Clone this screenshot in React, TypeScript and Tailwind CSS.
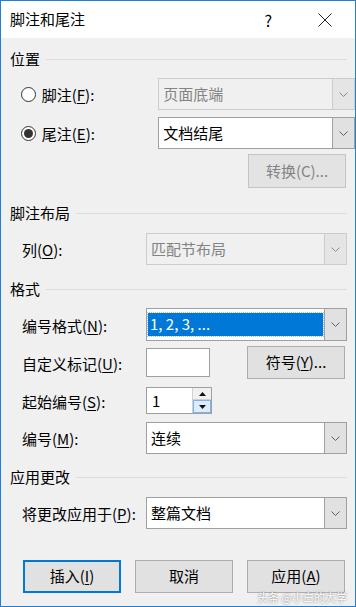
import React from 'react';

const font = { fontFamily: '"Noto Sans CJK SC", "Noto Sans", sans-serif' };

// 小的下拉箭头
function Chevron({ color = '#606060' }: { color?: string }) {
  return (
    <svg width="9" height="5" viewBox="0 0 9 5" fill="none">
      <path d="M0.5 0.5 L4.5 4.5 L8.5 0.5" stroke={color} strokeWidth="1" />
    </svg>
  );
}

function Heading({ text, className = '' }: { text: string; className?: string }) {
  return (
    <div className={`flex items-center h-[20px] pl-[9px] pr-[8px] gap-[6px] ${className}`}>
      <span className="text-[15px] leading-[20px] text-black whitespace-nowrap">{text}</span>
      <div className="flex-1 h-px bg-[#dcdcdc]" />
    </div>
  );
}

function Label({ pre, key1, post }: { pre: string; key1: string; post: string }) {
  return (
    <span className="text-[15px] leading-[20px] text-black whitespace-nowrap">
      {pre}(<span className="underline underline-offset-2">{key1}</span>){post}
    </span>
  );
}

function Combo({
  value,
  disabled = false,
  selected = false,
  h = 'h-[32px]',
}: {
  value: string;
  disabled?: boolean;
  selected?: boolean;
  h?: string;
}) {
  return (
    <div
      className={`flex w-[201px] ${h} border ${
        disabled ? 'border-[#cccccc] bg-[#f0f0f0]' : 'border-[#a0a0a0] bg-white'
      }`}
    >
      <div className="flex-1 flex items-center px-[1px]">
        {selected ? (
          <div className="flex items-center w-full h-[23px] bg-[#0078d7] outline outline-1 outline-dotted outline-[#9fc7ef] pl-[2px]">
            <span className="text-[15px] text-white">1, 2, 3, ...</span>
          </div>
        ) : (
          <span className={`pl-[3px] text-[15px] ${disabled ? 'text-[#838383]' : 'text-black'}`}>{value}</span>
        )}
      </div>
      <div
        className={`w-[22px] flex items-center justify-center border-l ${
          disabled ? 'border-[#cccccc] bg-[#e5e5e5]' : 'border-[#a0a0a0] bg-[#e1e1e1]'
        }`}
      >
        <Chevron color={disabled ? '#8a8a8a' : '#606060'} />
      </div>
    </div>
  );
}

function Radio({ checked }: { checked?: boolean }) {
  return (
    <div className="w-[15px] h-[15px] rounded-full border border-[#333333] bg-white flex items-center justify-center">
      {checked && <div className="w-[9px] h-[9px] rounded-full bg-[#333333]" />}
    </div>
  );
}

function Btn({ children, primary = false }: { children: React.ReactNode; primary?: boolean }) {
  return (
    <div
      className={`w-[98px] h-[33px] flex items-center justify-center text-[15px] bg-[#e1e1e1] text-black ${
        primary ? 'border-2 border-[#0078d7]' : 'border border-[#adadad]'
      }`}
    >
      {children}
    </div>
  );
}

export default function App() {
  return (
    <div style={font} className="relative w-[356px] h-[607px] border border-[#1e7fd6] bg-[#f0f0f0] flex flex-col overflow-hidden">
      {/* 标题栏 */}
      <div className="h-[37px] bg-white flex items-center pl-[9px] pr-[23px]">
        <span className="text-[15px] text-black flex-1">脚注和尾注</span>
        <span className="text-[16px] text-black mr-[46px]">?</span>
        <svg width="14" height="14" viewBox="0 0 14 14">
          <path d="M0.5 0.5 L13.5 13.5 M13.5 0.5 L0.5 13.5" stroke="#222" strokeWidth="1" />
        </svg>
      </div>

      {/* 位置 */}
      <Heading text="位置" className="mt-[11px]" />
      <div className="mt-[9px] flex items-center h-[32px] pl-[20px]">
        <Radio />
        <span className="ml-[6px] w-[119px]">
          <Label pre="脚注" key1="F" post=":" />
        </span>
        <Combo value="页面底端" disabled />
      </div>
      <div className="mt-[7px] flex items-center h-[32px] pl-[20px]">
        <Radio checked />
        <span className="ml-[6px] w-[119px]">
          <Label pre="尾注" key1="E" post=":" />
        </span>
        <Combo value="文档结尾" />
      </div>
      <div className="mt-[5px] flex justify-end pr-[9px]">
        <div className="w-[98px] h-[34px] flex items-center justify-center text-[15px] bg-[#e3e3e3] border border-[#c4c4c4] text-[#838383]">
          转换(C)...
        </div>
      </div>

      {/* 脚注布局 */}
      <Heading text="脚注布局" className="mt-[15px]" />
      <div className="mt-[10px] flex items-center h-[32px] pl-[21px]">
        <span className="w-[124px]">
          <Label pre="列" key1="O" post=":" />
        </span>
        <Combo value="匹配节布局" disabled />
      </div>

      {/* 格式 */}
      <Heading text="格式" className="mt-[14px]" />
      <div className="mt-[9px] flex items-center h-[33px] pl-[21px]">
        <span className="w-[124px]">
          <Label pre="编号格式" key1="N" post=":" />
        </span>
        <Combo value="1, 2, 3, ..." selected h="h-[33px]" />
      </div>
      <div className="mt-[5px] flex items-center h-[33px] pl-[21px]">
        <span className="w-[124px]">
          <Label pre="自定义标记" key1="U" post=":" />
        </span>
        <div className="w-[64px] h-[29px] bg-white border border-[#a0a0a0]" />
        <div className="ml-[37px] w-[98px] h-[33px] flex items-center justify-center text-[15px] bg-[#e1e1e1] border border-[#adadad] text-black">
          符号(<span className="underline underline-offset-2">Y</span>)...
        </div>
      </div>
      <div className="mt-[8px] flex items-center h-[27px] pl-[21px]">
        <span className="w-[124px]">
          <Label pre="起始编号" key1="S" post=":" />
        </span>
        <div className="w-[66px] h-[27px] bg-white border border-[#a0a0a0] flex">
          <span className="flex-1 pl-[5px] text-[15px] leading-[25px] text-black">1</span>
          <div className="w-[19px] flex flex-col border-l border-[#d0d0d0]">
            <div className="flex-1 flex items-center justify-center bg-[#f0f0f0] border-b border-[#d0d0d0]">
              <svg width="7" height="4" viewBox="0 0 7 4">
                <path d="M0 4 L3.5 0 L7 4 Z" fill="#111" />
              </svg>
            </div>
            <div className="flex-1 flex items-center justify-center bg-[#dcecfc] border border-[#7eb4ea]">
              <svg width="7" height="4" viewBox="0 0 7 4">
                <path d="M0 0 L7 0 L3.5 4 Z" fill="#111" />
              </svg>
            </div>
          </div>
        </div>
      </div>
      <div className="mt-[8px] flex items-center h-[32px] pl-[21px]">
        <span className="w-[124px]">
          <Label pre="编号" key1="M" post=":" />
        </span>
        <Combo value="连续" />
      </div>

      {/* 应用更改 */}
      <Heading text="应用更改" className="mt-[13px]" />
      <div className="mt-[10px] flex items-center h-[32px] pl-[21px]">
        <span className="w-[124px]">
          <Label pre="将更改应用于" key1="P" post=":" />
        </span>
        <Combo value="整篇文档" />
      </div>

      {/* 底部按钮 */}
      <div className="mt-[31px] flex pl-[22px] gap-[14px]">
        <Btn primary>
          插入(<span className="underline underline-offset-2">I</span>)
        </Btn>
        <Btn>取消</Btn>
        <Btn>
          应用(<span className="underline underline-offset-2">A</span>)
        </Btn>
      </div>

      {/* 水印 */}
      <span className="absolute right-[8px] bottom-[3px] text-[11px] leading-none text-white [text-shadow:0_0_2px_#666]">
        头条 @小白的大学
      </span>
    </div>
  );
}
